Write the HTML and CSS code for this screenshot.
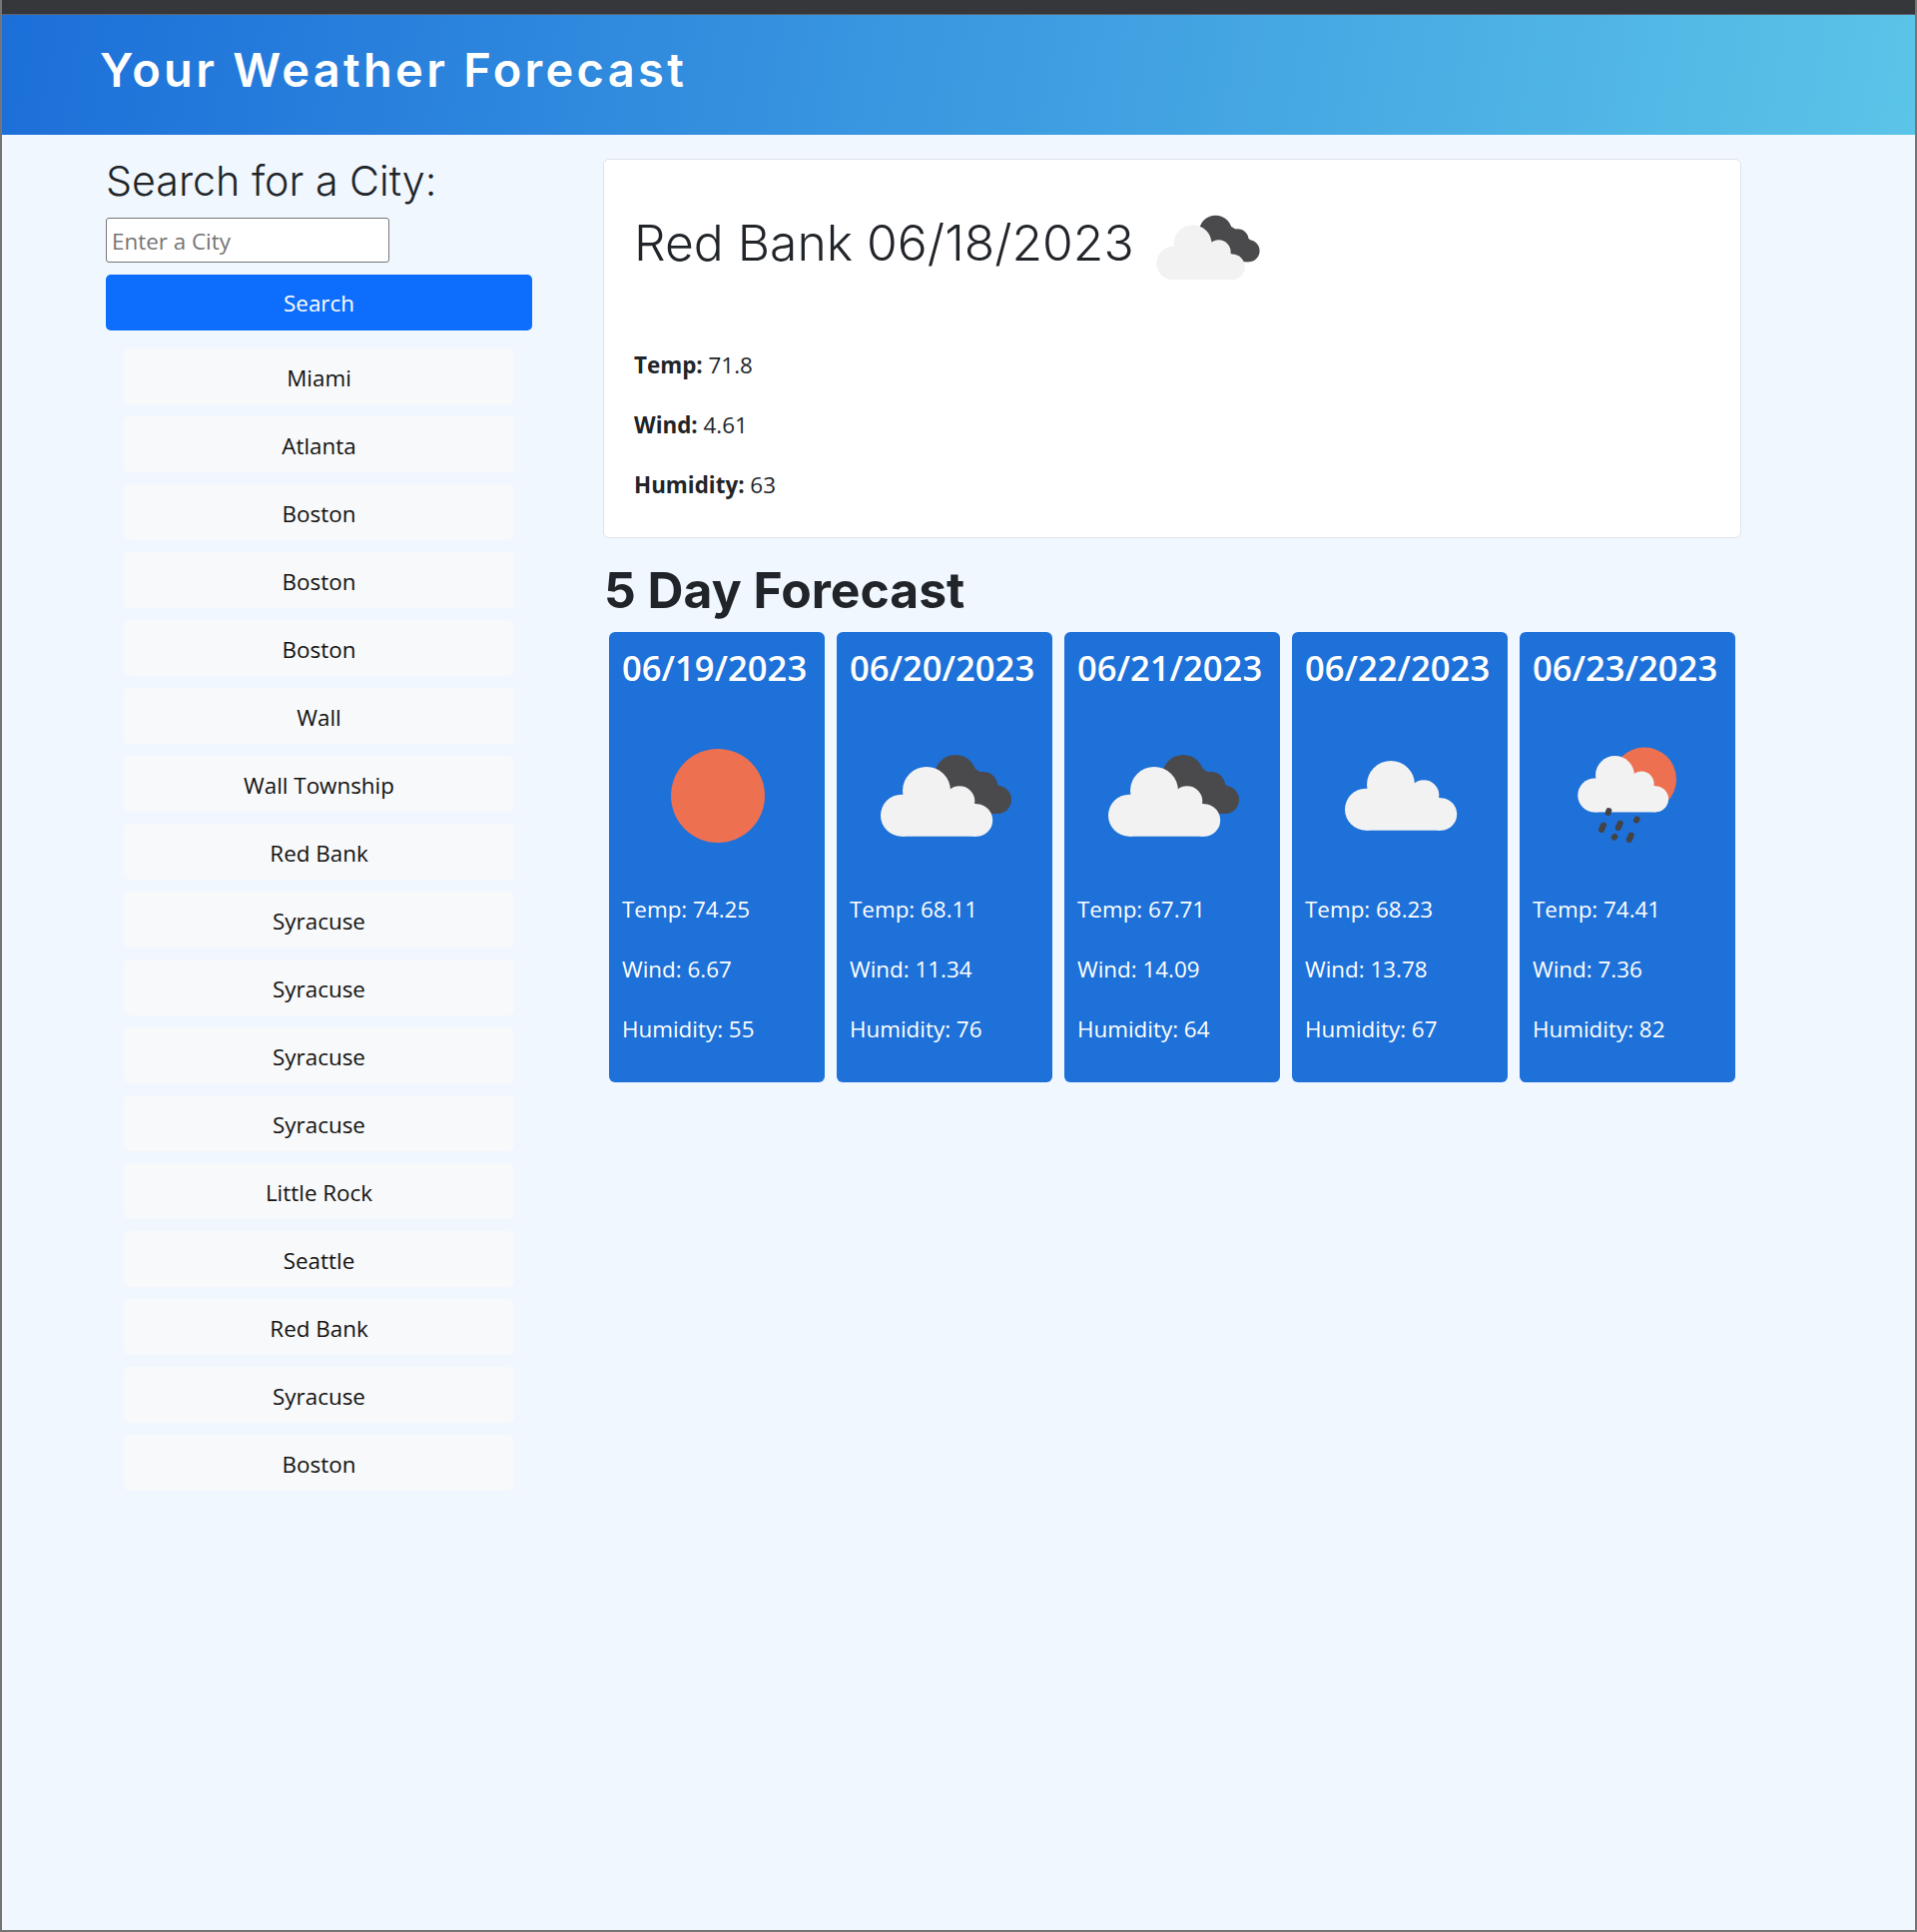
FILE: index.html
```html
<!DOCTYPE html>
<html lang="en">
<head>
    <meta charset="UTF-8">
    <meta name="viewport" content="width=device-width, initial-scale=1.0">
    <title>Your Weather Forecast</title>
    <link rel="stylesheet" href="styles.css">
</head>
<body>
    <svg class="icon-defs" width="0" height="0" aria-hidden="true">
        <symbol id="cloud-light" overflow="visible">
            <g class="cloud-fill">
                <circle cx="43" cy="86.7" r="21"/>
                <circle cx="68" cy="62" r="24"/>
                <circle cx="101" cy="72.5" r="15.3"/>
                <circle cx="118" cy="91.5" r="16.2"/>
                <rect x="43" y="75" width="75" height="32.7"/>
            </g>
        </symbol>
        <symbol id="cloud-dark" overflow="visible">
            <g class="dark-fill">
                <circle cx="97" cy="47" r="21"/>
                <circle cx="125" cy="57" r="14"/>
                <circle cx="139" cy="71" r="14"/>
                <polygon points="85,60 100,30 125,45 145,60 139,85 110,85"/>
            </g>
        </symbol>
    </svg>

    <div class="page">
        <div class="topbar"></div>
        <header class="site-header">
            <h1>Your Weather Forecast</h1>
        </header>
        <div class="content">
            <aside class="sidebar">
                <h2 class="search-title">Search for a City:</h2>
                <input class="city-input" type="text" placeholder="Enter a City">
                <button class="search-btn" type="button">Search</button>
                <ul class="history">
                    <li>Miami</li>
                    <li>Atlanta</li>
                    <li>Boston</li>
                    <li>Boston</li>
                    <li>Boston</li>
                    <li>Wall</li>
                    <li>Wall Township</li>
                    <li>Red Bank</li>
                    <li>Syracuse</li>
                    <li>Syracuse</li>
                    <li>Syracuse</li>
                    <li>Syracuse</li>
                    <li>Little Rock</li>
                    <li>Seattle</li>
                    <li>Red Bank</li>
                    <li>Syracuse</li>
                    <li>Boston</li>
                </ul>
            </aside>
            <main class="results">
                <section class="today">
                    <div class="today-head">
                        <h2 class="today-title">Red Bank 06/18/2023</h2>
                        <svg class="today-icon" viewBox="0 0 170 130">
                            <use href="#cloud-dark"/>
                            <use href="#cloud-light"/>
                        </svg>
                    </div>
                    <p><b>Temp:</b> 71.8</p>
                    <p><b>Wind:</b> 4.61</p>
                    <p><b>Humidity:</b> 63</p>
                </section>
                <h3 class="forecast-title">5 Day Forecast</h3>
                <div class="forecast">
                    <article class="day">
                        <h4>06/19/2023</h4>
                        <svg class="day-icon" viewBox="0 0 152 152">
                            <circle class="sun-fill" cx="77" cy="76" r="47"/>
                        </svg>
                        <p>Temp: 74.25</p>
                        <p>Wind: 6.67</p>
                        <p>Humidity: 55</p>
                    </article>
                    <article class="day">
                        <h4>06/20/2023</h4>
                        <svg class="day-icon" viewBox="0 0 152 152">
                            <g transform="translate(-10 9)">
                                <use href="#cloud-dark"/>
                                <use href="#cloud-light"/>
                            </g>
                        </svg>
                        <p>Temp: 68.11</p>
                        <p>Wind: 11.34</p>
                        <p>Humidity: 76</p>
                    </article>
                    <article class="day">
                        <h4>06/21/2023</h4>
                        <svg class="day-icon" viewBox="0 0 152 152">
                            <g transform="translate(-10 9)">
                                <use href="#cloud-dark"/>
                                <use href="#cloud-light"/>
                            </g>
                        </svg>
                        <p>Temp: 67.71</p>
                        <p>Wind: 14.09</p>
                        <p>Humidity: 64</p>
                    </article>
                    <article class="day">
                        <h4>06/22/2023</h4>
                        <svg class="day-icon" viewBox="0 0 152 152">
                            <use href="#cloud-light" transform="translate(-1 3)"/>
                        </svg>
                        <p>Temp: 68.23</p>
                        <p>Wind: 13.78</p>
                        <p>Humidity: 67</p>
                    </article>
                    <article class="day">
                        <h4>06/23/2023</h4>
                        <svg class="day-icon" viewBox="0 0 152 152">
                            <g transform="translate(6 9)">
                                <circle class="sun-fill" cx="87" cy="50.5" r="32"/>
                                <use href="#cloud-light" transform="translate(2.4 -3.8) scale(.81)"/>
                                <g class="rain">
                                    <line x1="51.3" y1="82" x2="50.7" y2="84"/>
                                    <line x1="46" y1="96.5" x2="44" y2="101"/>
                                    <line x1="62.7" y1="94.5" x2="60.7" y2="99"/>
                                    <line x1="79.6" y1="90.5" x2="79" y2="91.5"/>
                                    <line x1="57.3" y1="108" x2="56.7" y2="108.5"/>
                                    <line x1="73.7" y1="106.5" x2="71.7" y2="111"/>
                                </g>
                            </g>
                        </svg>
                        <p>Temp: 74.41</p>
                        <p>Wind: 7.36</p>
                        <p>Humidity: 82</p>
                    </article>
                </div>
            </main>
        </div>
    </div>
</body>
</html>
```

FILE: styles.css
```css
* {
    box-sizing: border-box;
}
body {
    margin: 0;
    font-family: "Open Sans", "Noto Sans", sans-serif;
    font-size: 22.4px;
    line-height: 30px;
    color: #212529;
    background-color: #f0f7ff;
}
p {
    margin: 0 0 30px;
}
.icon-defs {
    position: absolute;
}
.cloud-fill {
    fill: #f2f2f2;
}
.dark-fill {
    fill: #4a4a4d;
}
.sun-fill {
    fill: #ed7050;
}
.rain {
    stroke: #434346;
    stroke-width: 6;
    stroke-linecap: round;
}
.page {
    height: 1935px;
    border-left: 2px solid #757575;
    border-right: 2px solid #757575;
    border-bottom: 2px solid #757575;
}
.topbar {
    height: 15px;
    border-bottom: 1px solid #5a6570;
    background-color: #36373b;
}
.site-header {
    height: 120px;
    padding: 0 0 10px 98px;
    display: flex;
    align-items: center;
    background: linear-gradient(100deg, #1c6fd9, #5bc4e8);
}
.site-header h1 {
    margin: 0;
    font-family: Inter, sans-serif;
    font-size: 47px;
    font-weight: 600;
    letter-spacing: 3.3px;
    color: #fff;
}
.content {
    display: flex;
    padding: 19px 0 0 104px;
}
.sidebar {
    width: 427px;
    flex: none;
}
.search-title {
    margin: 0 0 10px;
    font-family: Inter, sans-serif;
    font-size: 41.2px;
    font-weight: 350;
    line-height: 55px;
    height: 54px;
}
.city-input {
    display: block;
    width: 284px;
    height: 45px;
    padding: 2px 5px 0;
    margin-bottom: 12px;
    border: 1px solid #767676;
    border-radius: 3px;
    background: #fff;
    font: inherit;
    color: #212529;
}
.city-input::placeholder {
    color: #757575;
}
.search-btn {
    display: block;
    width: 100%;
    height: 56px;
    padding-top: 3px;
    margin-bottom: 18px;
    border: none;
    border-radius: 5px;
    background-color: #0d6efd;
    color: #fff;
    font: inherit;
}
.history {
    list-style: none;
    margin: 0 18px;
    padding: 0;
}
.history li {
    height: 56px;
    margin-bottom: 12px;
    padding-top: 2px;
    border-radius: 5px;
    background-color: #f8f9fa;
    color: #111;
    text-align: center;
    line-height: 56px;
}
.results {
    width: 1140px;
    margin: 5px 0 0 71px;
}
.today {
    height: 380px;
    padding: 35px 30px 0;
    border: 1px solid #dfe3e8;
    border-radius: 6px;
    background-color: #fff;
}
.today-head {
    display: flex;
    align-items: center;
    height: 103px;
    margin-bottom: 53px;
}
.today-title {
    margin: 0 5px 7px 0;
    font-family: Inter, sans-serif;
    font-size: 49.8px;
    font-weight: 350;
    white-space: nowrap;
}
.today-icon {
    width: 134px;
    height: 103px;
}
.forecast-title {
    margin: 22px 0 12px 1px;
    font-family: Inter, sans-serif;
    font-size: 49.8px;
    font-weight: 700;
    line-height: 60px;
}
.forecast {
    display: flex;
    gap: 12px;
    padding: 0 6px;
}
.day {
    width: 216px;
    height: 451px;
    padding: 12px 13px 0;
    border-radius: 6px;
    background-color: #1d71d9;
    color: #fff;
}
.day h4 {
    margin: 0 -6px 28px 0;
    font-size: 34.6px;
    font-weight: 550;
    line-height: 48px;
    white-space: nowrap;
}
.day-icon {
    display: block;
    width: 152px;
    height: 152px;
    margin: 0 auto 23px;
}
```
